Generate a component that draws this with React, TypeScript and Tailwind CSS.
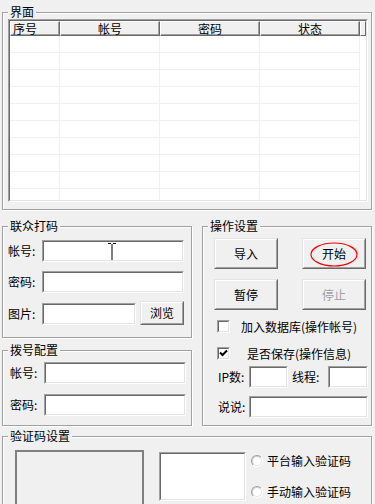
import React from "react";

const FONT = "font-['Noto_Sans_CJK_SC','Noto_Sans_CJK_JP',sans-serif]";

function Sunken({ className = "", children }: { className?: string; children?: React.ReactNode }) {
  return (
    <div className={`border border-t-[#a0a0a0] border-l-[#a0a0a0] border-b-white border-r-white ${className}`}>
      <div className="relative w-full h-full overflow-hidden border border-t-[#696969] border-l-[#696969] border-b-[#e3e3e3] border-r-[#e3e3e3] bg-white">
        {children}
      </div>
    </div>
  );
}

function Btn({ className = "", children, disabled = false }: { className?: string; children?: React.ReactNode; disabled?: boolean }) {
  return (
    <div className={`relative border border-t-[#e3e3e3] border-l-[#e3e3e3] border-b-[#696969] border-r-[#696969] ${className}`}>
      <div className={`w-full h-full border border-t-white border-l-white border-b-[#a0a0a0] border-r-[#a0a0a0] bg-[#f0f0f0] flex items-center justify-center ${disabled ? "text-[#a0a0a0]" : "text-black"}`}>
        {children}
      </div>
    </div>
  );
}

function Group({ title, className = "", contentClass = "", children }: { title: string; className?: string; contentClass?: string; children?: React.ReactNode }) {
  return (
    <fieldset className={`m-0 p-0 min-w-0 border border-[#a0a0a0] shadow-[inset_1px_1px_0_#fff,1px_1px_0_#fff] ${className}`}>
      <legend className="ml-[5px] px-[2px] leading-[14px] bg-[#f0f0f0]">{title}</legend>
      <div className={contentClass}>{children}</div>
    </fieldset>
  );
}

function Checkbox({ checked = false }: { checked?: boolean }) {
  return (
    <Sunken className="w-[13px] h-[13px] shrink-0">
      {checked && (
        <svg width="9" height="9" viewBox="0 0 9 9" className="absolute left-0 top-0">
          <path d="M1 3.5 L3.5 6 L8 1.5" stroke="#000" strokeWidth="2" fill="none" />
        </svg>
      )}
    </Sunken>
  );
}

function Radio() {
  return (
    <div className="w-[12px] h-[12px] rounded-full border border-t-[#a0a0a0] border-l-[#a0a0a0] border-b-white border-r-white shrink-0">
      <div className="w-full h-full rounded-full border border-t-[#c8c8c8] border-l-[#c8c8c8] border-b-[#e3e3e3] border-r-[#e3e3e3] bg-white" />
    </div>
  );
}

const cols = [
  { t: "序号", w: "w-[50px]", align: "justify-start pl-[2px]" },
  { t: "帐号", w: "w-[100px]", align: "justify-center" },
  { t: "密码", w: "w-[100px]", align: "justify-center" },
  { t: "状态", w: "w-[100px]", align: "justify-center" },
];

function ListView() {
  const rows = Array.from({ length: 10 });
  return (
    <Sunken className="w-[360px] h-[183px]">
      <div className="flex h-[15px]">
        {cols.map((c) => (
          <div
            key={c.t}
            className={`${c.w} shrink-0 h-full flex items-center ${c.align} border border-t-white border-l-white border-b-[#696969] border-r-[#696969] bg-[#f0f0f0] shadow-[inset_-1px_-1px_0_#a0a0a0]`}
          >
            {c.t}
          </div>
        ))}
        <div className="flex-1 h-full border border-t-white border-l-white border-b-[#696969] border-r-[#696969] bg-[#f0f0f0]" />
      </div>
      <div className="flex flex-col">
        {rows.map((_, i) => (
          <div key={i} className="flex h-[17px] shrink-0">
            <div className="w-[50px] h-full border-r border-b border-[#f0f0f0]" />
            <div className="w-[100px] h-full border-r border-b border-[#f0f0f0]" />
            <div className="w-[100px] h-full border-r border-b border-[#f0f0f0]" />
            <div className="w-[100px] h-full border-r border-b border-[#f0f0f0]" />
          </div>
        ))}
      </div>
    </Sunken>
  );
}

export default function App() {
  return (
    <div className={`w-[375px] h-[504px] overflow-hidden bg-[#f0f0f0] text-black text-[12px] leading-[14px] pl-[2px] pt-[5px] ${FONT}`}>
      <Group title="界面" className="w-[370px]" contentClass="pl-[5px] pb-[7px]">
        <ListView />
      </Group>

      <div className="flex mt-[9px]">
        <div className="flex flex-col w-[190px] shrink-0">
          <Group title="联众打码" contentClass="pl-[5px] pt-[7px] pb-[12px]">
            <div className="flex items-center">
              <span className="w-[34px]">帐号:</span>
              <Sunken className="w-[142px] h-[22px]">
                <svg width="8" height="18" viewBox="0 0 8 18" className="absolute left-[64px] top-[1px]">
                  <path d="M0 0.5H3M5 0.5H8M4 1V17M0 17.5H3M5 17.5H8" stroke="#000" strokeWidth="1" fill="none" />
                </svg>
              </Sunken>
            </div>
            <div className="flex items-center mt-[9px]">
              <span className="w-[34px]">密码:</span>
              <Sunken className="w-[142px] h-[22px]" />
            </div>
            <div className="flex items-end mt-[8px]">
              <span className="w-[34px] h-[22px] flex items-center">图片:</span>
              <Sunken className="w-[94px] h-[22px]" />
              <Btn className="ml-[4px] w-[44px] h-[24px]">浏览</Btn>
            </div>
          </Group>

          <Group title="拨号配置" className="mt-[5px]" contentClass="pl-[7px] pt-[5px] pb-[9px]">
            <div className="flex items-center">
              <span className="w-[34px]">帐号:</span>
              <Sunken className="w-[142px] h-[22px]" />
            </div>
            <div className="flex items-center mt-[10px]">
              <span className="w-[34px]">密码:</span>
              <Sunken className="w-[142px] h-[22px]" />
            </div>
          </Group>
        </div>

        <Group title="操作设置" className="ml-[10px] w-[170px]" contentClass="pt-[5px] pb-[7px]">
          <div className="flex pl-[11px] gap-[24px]">
            <Btn className="w-[64px] h-[31px]">导入</Btn>
            <Btn className="w-[64px] h-[31px]">
              开始
              <svg width="48" height="25" viewBox="0 0 48 25" className="absolute left-[7px] top-[3px]">
                <ellipse cx="24" cy="12.5" rx="23" ry="11.5" stroke="#ff0000" strokeWidth="1.2" fill="none" />
              </svg>
            </Btn>
          </div>
          <div className="flex pl-[11px] gap-[24px] mt-[10px]">
            <Btn className="w-[64px] h-[31px]">暂停</Btn>
            <Btn className="w-[64px] h-[31px]" disabled>停止</Btn>
          </div>
          <div className="flex items-center pl-[14px] mt-[10px] h-[13px]">
            <Checkbox />
            <span className="ml-[11px] whitespace-nowrap">加入数据库(操作帐号)</span>
          </div>
          <div className="flex items-center pl-[14px] mt-[14px] h-[13px]">
            <Checkbox checked />
            <span className="ml-[17px] whitespace-nowrap">是否保存(操作信息)</span>
          </div>
          <div className="flex items-center pl-[15px] mt-[6px]">
            <span className="w-[31px]">IP数:</span>
            <Sunken className="w-[39px] h-[22px]" />
            <span className="ml-[4px] w-[36px]">线程:</span>
            <Sunken className="w-[40px] h-[22px]" />
          </div>
          <div className="flex items-center pl-[15px] mt-[8px]">
            <span className="w-[31px]">说说:</span>
            <Sunken className="w-[119px] h-[22px]" />
          </div>
        </Group>
      </div>

      <Group title="验证码设置" className="mt-[3px] w-[370px]" contentClass="pl-[12px] pt-[7px]">
        <div className="flex">
          <div className="w-[129px] h-[70px] border-2 border-[#808080] shrink-0" />
          <Sunken className="ml-[15px] mt-[2px] w-[87px] h-[49px] shrink-0" />
          <div className="ml-[5px] flex flex-col">
            <div className="flex items-center mt-[4px] h-[14px]">
              <Radio />
              <span className="ml-[4px] whitespace-nowrap">平台输入验证码</span>
            </div>
            <div className="flex items-center mt-[17px] h-[14px]">
              <Radio />
              <span className="ml-[4px] whitespace-nowrap">手动输入验证码</span>
            </div>
          </div>
        </div>
      </Group>
    </div>
  );
}
